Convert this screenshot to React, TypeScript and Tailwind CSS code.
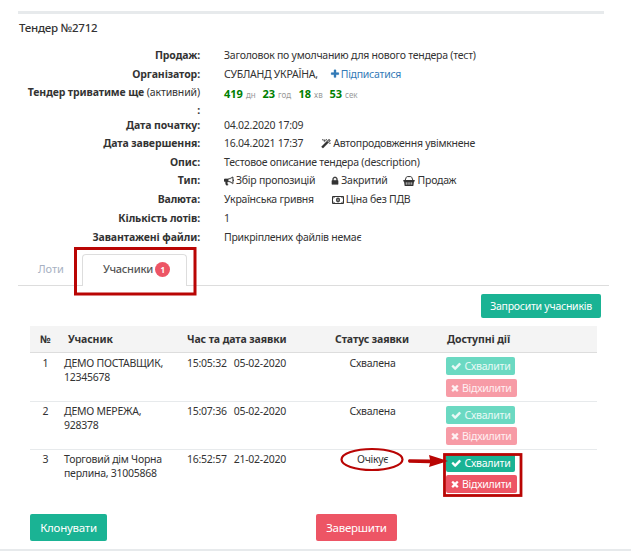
import React from "react";

const paths = {
  times:
    "M1490 1322q0 40-28 68l-136 136q-28 28-68 28t-68-28l-294-294-294 294q-28 28-68 28t-68-28l-136-136q-28-28-28-68t28-68l294-294-294-294q-28-28-28-68t28-68l136-136q28-28 68-28t68 28l294 294 294-294q28-28 68-28t68 28l136 136q28 28 28 68t-28 68l-294 294 294 294q28 28 28 68z",
  check:
    "M1671 566q0 40-28 68l-724 724-136 136q-28 28-68 28t-68-28l-136-136-362-362q-28-28-28-68t28-68l136-136q28-28 68-28t68 28l294 295 656-657q28-28 68-28t68 28l136 136q28 28 28 68z",
  plus:
    "M1600 736v192q0 40-28 68t-68 28h-416v416q0 40-28 68t-68 28h-192q-40 0-68-28t-28-68v-416h-416q-40 0-68-28t-28-68v-192q0-40 28-68t68-28h416v-416q0-40 28-68t68-28h192q40 0 68 28t28 68v416h416q40 0 68 28t28 68z",
  lock:
    "M640 768h512v-192q0-106-75-181t-181-75-181 75-75 181v192zm832 96v576q0 40-28 68t-68 28h-960q-40 0-68-28t-28-68v-576q0-40 28-68t68-28h32v-192q0-184 132-316t316-132 316 132 132 316v192h32q40 0 68 28t28 68z",
  bullhorn:
    "M1664 640q53 0 90.500 37.500t37.500 90.500-37.500 90.500-90.500 37.500v384q0 52-38 90t-90 38q-417-347-812-380-58 19-91 66t-31 100.500 40 92.500q-20 33-23 65.500t6 58 33.500 55 48 50 61.500 50.500q-29 58-111.500 83t-168.500 11.500-132-55.500q-7-23-29.500-87.500t-32-94.500-23-89-15-101 3.500-98.500 22-110.500h-122q-66 0-113-47t-47-113v-192q0-66 47-113t113-47h480q435 0 896-384 52 0 90 38t38 90v384zm-128 604v-954q-394 302-768 343v270q377 42 768 341z",
  magic:
    "M1254 581l293-293-107-107-293 293zm447-293q0 27-18 45l-1286 1286q-18 18-45 18t-45-18l-198-198q-18-18-18-45t18-45l1286-1286q18-18 45-18t45 18l198 198q18 18 18 45zm-1351-190l98 30-98 30-30 98-30-98-98-30 98-30 30-98zm350 162l196 60-196 60-60 196-60-196-196-60 196-60 60-196zm930 478l98 30-98 30-30 98-30-98-98-30 98-30 30-98zm-640-640l98 30-98 30-30 98-30-98-98-30 98-30 30-98z",
};

function Icon({ name, className }: { name: keyof typeof paths; className: string }) {
  return (
    <svg viewBox="0 0 1792 1792" fill="currentColor" stroke="currentColor" strokeWidth="40" className={`shrink-0 ${className}`}>
      <path d={paths[name]} />
    </svg>
  );
}

function Money() {
  return (
    <svg viewBox="0 0 12 8" className="h-2 w-3 shrink-0" fill="none" stroke="currentColor">
      <path d="M.5 .5h11v7h-11z" />
      <path d="M1 2.500L2.500 1M11 2.500L9.500 1M1 5.500L2.500 7M11 5.500L9.500 7" />
      <ellipse cx="6" cy="4" rx="2" ry="2.400" fill="currentColor" stroke="none" />
      <path d="M6 2.700v2.600" stroke="#fff" strokeWidth=".7" />
    </svg>
  );
}

function Basket() {
  return (
    <svg viewBox="0 0 12 10" className="ml-[15px] mr-[3px] h-[10px] w-3 shrink-0" fill="none" stroke="currentColor">
      <path d="M2 4.500L3.300 1.300Q3.600 .6 4.400 .6h3.200Q8.400 .6 8.700 1.300L10 4.500" />
      <path d="M.3 4h11.400v1.500H11L10.300 10H1.700L1 5.500H.3z" fill="currentColor" stroke="none" />
      <path d="M3.300 6.300v2.400M5.100 6.300v2.400M6.900 6.300v2.400M8.700 6.300v2.400" stroke="#fff" strokeWidth=".7" />
    </svg>
  );
}

function Row({ label, h, children }: { label: React.ReactNode; h: string; children?: React.ReactNode }) {
  return (
    <div className={`flex ${h}`}>
      <div className="w-[200px] shrink-0 text-right font-bold tracking-[-0.11px]">{label}</div>
      <div className="ml-6 flex h-full items-center self-start whitespace-nowrap">{children}</div>
    </div>
  );
}

function Actions({ faded, gap }: { faded?: boolean; gap: string }) {
  return (
    <div className={`flex flex-col items-start text-[10.5px] ${gap} ${faded ? "text-white/85" : "text-white"}`}>
      <button className={`flex h-[18px] w-[69px] items-center rounded-[2px] pl-[5px] leading-[18px] ${faded ? "bg-[#6bd9c2]" : "bg-[#1ab394]"}`}>
        <Icon name="check" className="mr-[3px] size-[10.5px]" />
        Схвалити
      </button>
      <button className={`flex h-[18px] w-[71px] items-center rounded-[2px] pl-[4px] leading-[18px] ${faded ? "bg-[#f79ba6]" : "bg-[#ed5565]"}`}>
        <Icon name="times" className="mr-[2px] size-[10px]" />
        Відхилити
      </button>
    </div>
  );
}

const bids = [
  { n: 1, a: "ДЕМО ПОСТАВЩИК,", b: "12345678", time: "15:05:32", date: "05-02-2020", status: "Схвалена" },
  { n: 2, a: "ДЕМО МЕРЕЖА,", b: "928378", time: "15:07:36", date: "05-02-2020", status: "Схвалена" },
  { n: 3, a: "Торговий дім Чорна", b: "перлина, 31005868", time: "16:52:57", date: "21-02-2020", status: "Очікує" },
];

const countdown = [
  ["419", "дн", "w-[38.500px]"],
  ["23", "год", "w-[36px]"],
  ["18", "хв", "w-[31px]"],
  ["53", "сек", "w-[30px]"],
];

export default function App() {
  return (
    <div className="relative h-[554px] w-[631px] overflow-hidden bg-white font-['Noto_Sans','Open_Sans',sans-serif] text-[10.5px] tracking-[-0.25px] text-[#333]">
      <div className="ml-[18px] mt-[11px] h-[3px] w-[586px] bg-[#e7eaec]" />
      <h1 className="ml-[19px] mt-[5px] h-[27px] text-[11.5px] font-medium leading-[18px]">Тендер №2712</h1>

      <section className="leading-[19px]">
        <Row label="Продаж:" h="h-[19px]">Заголовок по умолчанию для нового тендера (тест)</Row>
        <Row label="Організатор:" h="h-[18px]">
          СУБЛАНД УКРАЇНА,
          <a className="ml-[12px] flex items-center text-[#337ab7]">
            <Icon name="plus" className="mr-px size-[10px]" />
            Підписатися
          </a>
        </Row>
        <div className="flex h-[33px]">
          <div className="w-[200px] shrink-0 text-right font-bold leading-[18px] tracking-[-0.12px]">
            <div className="whitespace-nowrap">Тендер триватиме ще <span className="font-normal">(активний)</span></div>
            <div>:</div>
          </div>
          <div className="ml-6 flex h-[22px] items-baseline tracking-normal">
            {countdown.map(([v, u, w]) => (
              <span key={u} className={`${w} whitespace-nowrap text-[11px] font-bold leading-[22px] text-[#008000]`}>
                {v}<span className="ml-[3px] text-[8px] font-normal text-[#999]">{u}</span>
              </span>
            ))}
          </div>
        </div>
        <Row label="Дата початку:" h="h-[18px]">04.02.2020 17:09</Row>
        <Row label="Дата завершення:" h="h-[19px]">
          16.04.2021 17:37
          <Icon name="magic" className="ml-[18px] mr-[2px] size-[10px]" />
          Автопродовження увімкнене
        </Row>
        <Row label="Опис:" h="h-[18px]">Тестовое описание тендера (description)</Row>
        <Row label="Тип:" h="h-[19px]">
          <Icon name="bullhorn" className="mr-[2px] size-[10px]" />
          Збір пропозицій
          <Icon name="lock" className="ml-[15px] mr-px size-[10px]" />
          Закритий
          <Basket />
          Продаж
        </Row>
        <Row label="Валюта:" h="h-[19px]">
          Українська гривня<span className="ml-[18px] mr-[2px]"><Money /></span>Ціна без ПДВ
        </Row>
        <Row label="Кількість лотів:" h="h-[19px]">1</Row>
        <Row label="Завантажені файли:" h="h-[19px]">Прикріплених файлів немає</Row>
      </section>

      <nav className="ml-[18px] mt-[6px] flex h-[33px] w-[591px] items-end border-b border-[#ddd]">
        <div className="h-[31px] w-[64px] pl-[20px] pt-[5px] text-[11px] leading-[20px] tracking-[-0.1px] text-[#a7b1c2]">Лоти</div>
        <div className="-mb-px flex h-[32px] w-[105px] items-center rounded-t-[4px] border border-b-0 border-[#ddd] bg-white pb-[2px] pl-[20px] text-[11px] font-medium text-[#555]">
          Учасники
          <span className="ml-[2px] flex size-[15px] items-center justify-center rounded-full bg-[#ed5565] text-[8px] font-bold leading-none text-white">1</span>
        </div>
      </nav>

      <button className="ml-[481px] mt-[8px] block h-6 w-[120px] rounded-[2px] bg-[#1ab394] text-[10.5px] leading-6 text-white">Запросити учасників</button>

      <section className="ml-[30px] mt-[8px] w-[567px]">
        <div className="grid h-[27px] grid-cols-[34px_123px_148px_112px_150px] border-b border-[#ddd] bg-[#f4f4f4] font-bold leading-[26px] tracking-[-0.1px]">
          <div className="pl-[10px]">№</div>
          <div className="pl-1">Учасник</div>
          <div>Час та дата заявки</div>
          <div>Статус заявки</div>
          <div>Доступні дії</div>
        </div>
        {bids.map((b, i) => (
          <div key={b.n} className={`grid h-12 grid-cols-[34px_123px_259px_151px] pt-1 leading-[13.5px] ${i ? "border-t border-[#e7eaec]" : ""}`}>
            <div className={`pl-[12.5px] ${i ? "-mt-px" : ""}`}>{b.n}</div>
            <div className={`whitespace-nowrap ${i ? "-mt-px" : ""}`}>{b.a}<br />{b.b}</div>
            <div className={`flex ${i ? "-mt-px" : ""}`}>
              <div className="w-[127px]">{b.time}<span className="ml-[7px]">{b.date}</span></div>
              <div className="w-[117px] text-center">{b.status}</div>
            </div>
            <Actions faded={i < 2} gap={i ? "gap-[3px]" : "gap-1"} />
          </div>
        ))}
      </section>

      <footer className="mt-[17px] flex h-[27px] pl-[30px] text-[11.5px] leading-[27px] text-white">
        <button className="w-[77px] rounded-[2px] bg-[#1ab394]">Клонувати</button>
        <button className="ml-[209px] w-[81px] rounded-[2px] bg-[#ed5565]">Завершити</button>
      </footer>
      <div className="mt-2 h-[2px] bg-[#e7eaec]" />

      <svg className="pointer-events-none absolute inset-0" width="631" height="554" fill="none" stroke="#b90504">
        <rect x="75.500" y="248.500" width="119.500" height="45.500" strokeWidth="3" />
        <rect x="444.500" y="454.500" width="76.500" height="41" strokeWidth="2.800" />
        <ellipse cx="372" cy="459.500" rx="30.500" ry="10.500" strokeWidth="2.200" />
        <path d="M409 459.300Q407 461 409 462.700L430 463.300 429 467 448 461 429 455 430 459.500z" fill="#b90504" stroke="none" />
      </svg>
    </div>
  );
}
